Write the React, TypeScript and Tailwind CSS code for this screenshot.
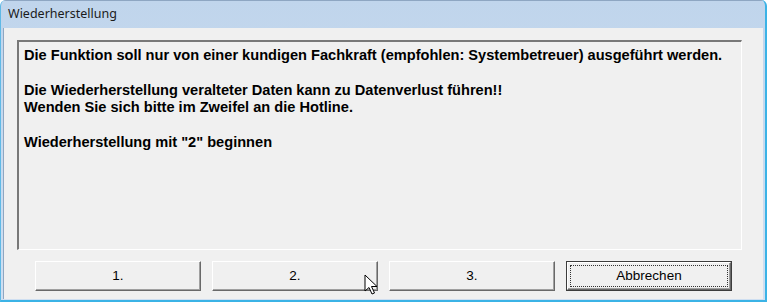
const font = { fontFamily: '"Liberation Sans", Arial, sans-serif' };

type BtnProps = { label: string; isDefault?: boolean };

function DlgButton({ label, isDefault }: BtnProps) {
    if (isDefault)
        return (
            <div className="w-[166px] h-[30px] border border-[#3c3c3c] bg-[#f0f0f0]">
                <div className="h-full w-full border-t border-l border-t-white border-l-white border-b border-r border-b-[#696969] border-r-[#696969] shadow-[inset_-1px_-1px_0_#a0a0a0] p-[2px]">
                    <div className="h-full w-full border border-dotted border-[#333] flex items-center justify-center text-[13.5px] text-black">
                        {label}
                    </div>
                </div>
            </div>
        );
    return (
        <div className="w-[166px] h-[30px] bg-[#f0f0f0] border-t border-l border-t-white border-l-white border-b border-r border-b-[#696969] border-r-[#696969] shadow-[inset_-1px_-1px_0_#a0a0a0] flex items-center justify-center text-[13.5px] text-black">
            {label}
        </div>
    );
}

function Cursor() {
    return (
        <svg className="absolute left-[363px] top-[274px]" width="15" height="22" viewBox="0 0 15 22">
            <path
                d="M1 1 L1 17 L5 13.5 L8 20 L10.5 19 L7.5 12.5 L13 12.5 Z"
                fill="white"
                stroke="black"
                strokeWidth="1"
                strokeLinejoin="miter"
            />
        </svg>
    );
}

export default function App() {
    return (
        <div
            className="relative w-[767px] h-[302px] bg-gradient-to-b from-[#c0d5ec] to-[#cfdff1] flex flex-col rounded-t-[6px] border-l border-l-[#5fb9e6] border-r-2 border-r-[#3bb3e6] border-b-2 border-b-[#3bb3e6] overflow-hidden"
            style={font}
        >
            <div className="h-[28px] flex items-center pl-[7px] border-t border-t-[#8ea6c2] shrink-0">
                <span className="text-[12.5px] text-[#1b1b1b]" style={{ fontFamily: '"Noto Sans", "Liberation Sans", sans-serif' }}>
                    Wiederherstellung
                </span>
            </div>
            <div className="flex-1 ml-[2px] mr-[2px] mb-[1px] bg-[#f0f0f0] border-l border-l-[#8ea6c2] pt-[12px] pl-[13px]">
                <div className="w-[725px] h-[210px] border-t-2 border-l-2 border-t-[#787878] border-l-[#787878] border-b border-r border-b-white border-r-white pt-[5px] pl-[5px] text-[14.6px] leading-[17.4px] font-bold text-black">
                    <p>Die Funktion soll nur von einer kundigen Fachkraft (empfohlen: Systembetreuer) ausgeführt werden.</p>
                    <p>&nbsp;</p>
                    <p>Die Wiederherstellung veralteter Daten kann zu Datenverlust führen!!</p>
                    <p>Wenden Sie sich bitte im Zweifel an die Hotline.</p>
                    <p>&nbsp;</p>
                    <p>Wiederherstellung mit "2" beginnen</p>
                </div>
                <div className="flex gap-[11px] mt-[11px] pl-[18px]">
                    <DlgButton label="1." />
                    <DlgButton label="2." />
                    <DlgButton label="3." />
                    <DlgButton label="Abbrechen" isDefault />
                </div>
            </div>
            <Cursor />
        </div>
    );
}
